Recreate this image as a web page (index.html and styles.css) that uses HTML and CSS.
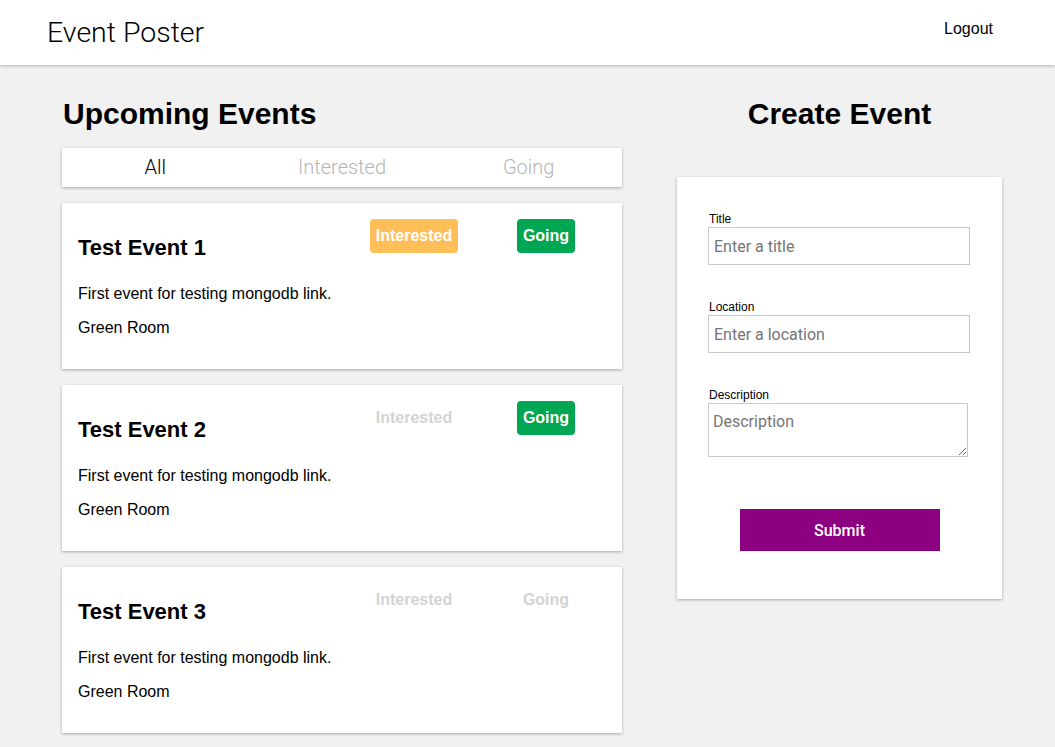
FILE: index.html
```html
<!DOCTYPE html>
<html lang="en">
<head>
<meta charset="utf-8">
<title>Event Poster</title>
<link rel="stylesheet" href="styles.css">
</head>
<body>
<header class="topbar">
  <div class="brand">Event Poster</div>
  <a class="logout" href="#">Logout</a>
</header>
<main class="main">
  <section class="events">
    <h1 class="heading">Upcoming Events</h1>
    <nav class="tabs">
      <div class="tab active">All</div>
      <div class="tab">Interested</div>
      <div class="tab">Going</div>
    </nav>
    <div class="card">
      <div class="card-head">
        <h2 class="event-title">Test Event 1</h2>
        <div class="actions">
          <div class="cell"><span class="btn btn-interested">Interested</span></div>
          <div class="cell"><span class="btn btn-going">Going</span></div>
        </div>
      </div>
      <p class="desc">First event for testing mongodb link.</p>
      <p class="loc">Green Room</p>
    </div>
    <div class="card">
      <div class="card-head">
        <h2 class="event-title">Test Event 2</h2>
        <div class="actions">
          <div class="cell"><span class="btn btn-off">Interested</span></div>
          <div class="cell"><span class="btn btn-going">Going</span></div>
        </div>
      </div>
      <p class="desc">First event for testing mongodb link.</p>
      <p class="loc">Green Room</p>
    </div>
    <div class="card">
      <div class="card-head">
        <h2 class="event-title">Test Event 3</h2>
        <div class="actions">
          <div class="cell"><span class="btn btn-off">Interested</span></div>
          <div class="cell"><span class="btn btn-off">Going</span></div>
        </div>
      </div>
      <p class="desc">First event for testing mongodb link.</p>
      <p class="loc">Green Room</p>
    </div>
  </section>
  <section class="create">
    <h1 class="heading heading-center">Create Event</h1>
    <form class="form-card">
      <label class="label" for="title">Title</label>
      <input class="field" id="title" type="text" placeholder="Enter a title">
      <label class="label label-gap" for="location">Location</label>
      <input class="field" id="location" type="text" placeholder="Enter a location">
      <label class="label label-gap" for="description">Description</label>
      <textarea class="area" id="description" placeholder="Description"></textarea>
      <div class="submit-row"><button class="submit" type="button">Submit</button></div>
    </form>
  </section>
</main>
</body>
</html>
```

FILE: styles.css
```css
* { box-sizing: border-box; }
html, body { margin: 0; padding: 0; }
body {
  background: #f1f1f1;
  font-family: "Liberation Sans", Arial, sans-serif;
  color: #000;
  min-height: 747px;
}
.topbar {
  height: 65px;
  background: #fff;
  box-shadow: 0 1px 3px rgba(0,0,0,0.25);
  display: flex;
  justify-content: space-between;
  align-items: flex-start;
  padding: 0 62px 0 47px;
  position: relative;
}
.brand {
  font-family: Roboto, "Liberation Sans", sans-serif;
  font-weight: 300;
  font-size: 28.5px;
  line-height: 34px;
  margin-top: 16px;
  color: #000;
}
.logout {
  font-size: 16px;
  line-height: 18px;
  color: #000;
  text-decoration: none;
  margin-top: 20px;
}
.main {
  display: flex;
  gap: 55px;
  padding: 0 53px 0 62px;
}
.events { width: 560px; }
.create { width: 325px; }
.heading {
  font-size: 30px;
  line-height: 34px;
  font-weight: 700;
  margin: 32px 0 17px 1px;
}
.heading-center {
  text-align: center;
  margin: 32px 0 46px 0;
}
.tabs {
  display: flex;
  height: 39px;
  background: #fff;
  box-shadow: 0 1px 3px rgba(0,0,0,0.3);
  margin-bottom: 16px;
}
.tab {
  flex: 1;
  text-align: center;
  font-family: Roboto, "Liberation Sans", sans-serif;
  font-weight: 300;
  font-size: 20px;
  line-height: 39px;
  color: #b5b5b5;
}
.tab.active { color: #000; }
.card {
  background: #fff;
  box-shadow: 0 1px 3px rgba(0,0,0,0.3);
  padding: 16px 10px 32px 16px;
  margin-bottom: 16px;
}
.card-head {
  display: flex;
  justify-content: space-between;
  align-items: flex-start;
}
.event-title {
  font-size: 22px;
  line-height: 26px;
  font-weight: 700;
  margin: 16px 0 0 0;
}
.actions { display: flex; }
.cell {
  width: 132px;
  display: flex;
  justify-content: center;
}
.btn {
  display: inline-block;
  height: 34px;
  line-height: 34px;
  padding: 0 6px;
  border-radius: 4px;
  font-size: 16px;
  font-weight: 700;
  color: #fff;
}
.btn-interested { background: #ffbf58; }
.btn-going { background: #00a651; }
.btn-off { color: #d3d3d3; }
.desc {
  font-size: 16px;
  line-height: 18px;
  margin: 24px 0 0 0;
}
.loc {
  font-size: 16px;
  line-height: 18px;
  margin: 16px 0 0 0;
}
.form-card {
  background: #fff;
  box-shadow: 0 1px 3px rgba(0,0,0,0.3);
  padding: 35px 31px 48px 31px;
  display: flex;
  flex-direction: column;
}
.label {
  font-size: 12px;
  line-height: 14px;
  margin-bottom: 1px;
  margin-left: 1px;
}
.label-gap { margin-top: 35px; }
.field, .area {
  font-family: Roboto, "Liberation Sans", sans-serif;
  font-size: 16px;
  border: 1px solid #c8c8c8;
  border-radius: 0;
  outline: none;
  color: #000;
}
.field {
  width: 262px;
  height: 38px;
  padding: 0 5px;
}
.area {
  width: 260px;
  height: 54px;
  padding: 8px 4px;
  resize: vertical;
}
.field::placeholder, .area::placeholder { color: #757575; }
.submit-row {
  display: flex;
  justify-content: center;
  margin-top: 52px;
}
.submit {
  width: 200px;
  height: 42px;
  background: #8e0082;
  color: #fff;
  border: none;
  font-family: Roboto, "Liberation Sans", sans-serif;
  font-weight: 500;
  font-size: 16px;
  cursor: pointer;
}
```
